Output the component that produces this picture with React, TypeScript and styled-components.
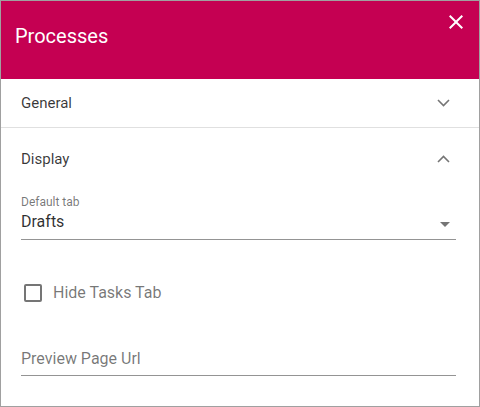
import React from "react";
import styled, { createGlobalStyle } from "styled-components";

const Global = createGlobalStyle`
  html, body { margin: 0; padding: 0; background: #fff; }
  body { font-family: Roboto, "Noto Sans", Arial, sans-serif; }
  * { box-sizing: border-box; }
`;

const Dialog = styled.div`
  width: 480px;
  height: 407px;
  border: 1px solid #a0a0a0;
  background: #fff;
  display: flex;
  flex-direction: column;
  overflow: hidden;
`;

const Header = styled.header`
  height: 78px;
  flex: none;
  background: #c50052;
  display: flex;
  justify-content: space-between;
  align-items: flex-start;
  padding: 0 11px 0 14px;
`;

const Title = styled.h1`
  margin: 23px 0 0;
  font-size: 20px;
  line-height: 24px;
  font-weight: 400;
  color: #fff;
`;

const CloseButton = styled.button`
  margin-top: 9px;
  width: 24px;
  height: 24px;
  padding: 0;
  border: 0;
  background: none;
  color: #fff;
  display: flex;
  cursor: pointer;
`;

const PanelHeader = styled.div<{ $height: number; $divider?: boolean }>`
  height: ${(p) => p.$height}px;
  flex: none;
  display: flex;
  align-items: center;
  justify-content: space-between;
  padding: 0 29px 0 20px;
  font-size: 15px;
  color: rgba(0, 0, 0, 0.78);
  border-bottom: ${(p) => (p.$divider ? "1px solid #e0e0e0" : "none")};
`;

const Body = styled.div`
  padding: 5px 23px 0 20px;
  display: flex;
  flex-direction: column;
`;

const FieldLabel = styled.div`
  font-size: 12px;
  line-height: 14px;
  color: rgba(0, 0, 0, 0.54);
`;

const SelectRow = styled.div`
  margin-top: 3px;
  display: flex;
  align-items: center;
  justify-content: space-between;
  padding-bottom: 7px;
  border-bottom: 1px solid #949494;
`;

const SelectValue = styled.span`
  font-size: 16px;
  line-height: 20px;
  color: rgba(0, 0, 0, 0.82);
`;

const Arrow = styled.span`
  width: 0;
  height: 0;
  margin: 4px 6px 0 0;
  border-left: 5px solid transparent;
  border-right: 5px solid transparent;
  border-top: 5px solid rgba(0, 0, 0, 0.54);
`;

const CheckRow = styled.label`
  margin-top: 43px;
  display: flex;
  align-items: center;
  gap: 11px;
  padding-left: 3px;
  font-size: 16px;
  line-height: 20px;
  color: rgba(0, 0, 0, 0.54);
`;

const Box = styled.span`
  width: 18px;
  height: 18px;
  border: 2px solid rgba(0, 0, 0, 0.54);
  border-radius: 2px;
`;

const TextInput = styled.div`
  margin-top: 46px;
  font-size: 16px;
  line-height: 20px;
  padding-bottom: 6px;
  color: rgba(0, 0, 0, 0.54);
  border-bottom: 1px solid #949494;
`;

const Chevron = ({ up }: { up?: boolean }) => (
  <svg width="13" height="8" viewBox="0 0 13 8">
    <polyline
      points={up ? "1,7 6.5,1.5 12,7" : "1,1 6.5,6.5 12,1"}
      fill="none"
      stroke="rgba(0,0,0,0.54)"
      strokeWidth="1.6"
    />
  </svg>
);

export default function App() {
  return (
    <>
      <Global />
      <Dialog>
        <Header>
          <Title>Processes</Title>
          <CloseButton aria-label="Close">
            <svg width="24" height="24" viewBox="0 0 24 24" fill="currentColor">
              <path d="M19 6.41L17.59 5 12 10.59 6.41 5 5 6.41 10.59 12 5 17.59 6.41 19 12 13.41 17.59 19 19 17.59 13.41 12z" />
            </svg>
          </CloseButton>
        </Header>
        <PanelHeader $height={49} $divider>
          <span>General</span>
          <Chevron />
        </PanelHeader>
        <PanelHeader $height={62}>
          <span>Display</span>
          <Chevron up />
        </PanelHeader>
        <Body>
          <FieldLabel>Default tab</FieldLabel>
          <SelectRow>
            <SelectValue>Drafts</SelectValue>
            <Arrow />
          </SelectRow>
          <CheckRow>
            <Box />
            <span>Hide Tasks Tab</span>
          </CheckRow>
          <TextInput>Preview Page Url</TextInput>
        </Body>
      </Dialog>
    </>
  );
}
